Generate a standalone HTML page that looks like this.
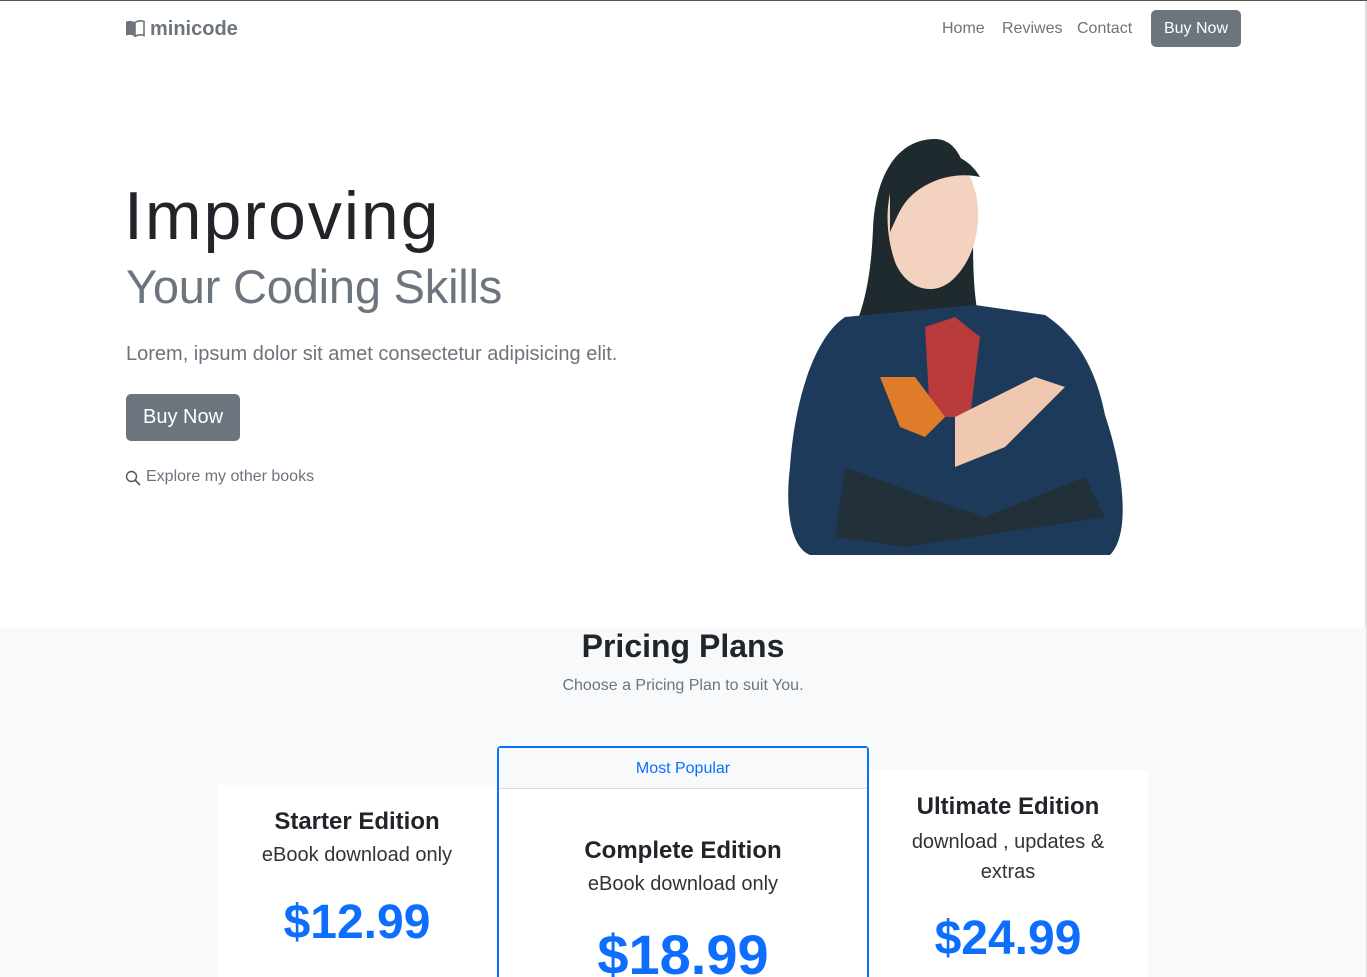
<!DOCTYPE html>
<html><head><meta charset="utf-8"><style>
*{box-sizing:border-box;margin:0;padding:0}
html,body{width:1367px;height:977px;overflow:hidden}
body{font-family:"Liberation Sans","DejaVu Sans",sans-serif;background:#fff;border-top:1px solid #555;position:relative;color:#212529}
.a{position:absolute}
.nav a{position:absolute;top:19px;font-size:16px;color:#6c757d;text-decoration:none}
.btn{background:#6c757d;color:#fff;border-radius:5px;position:absolute;text-align:center}
.pr{background:#f8f9fa;top:626px;left:0;width:1366px;height:351px}
.card{background:#fff;text-align:center}
h3{font-size:24px;font-weight:bold;color:#212529}
.sub{font-size:20px;color:#333;font-weight:300}
.price{color:#0d6efd;font-weight:bold;font-size:48px}
</style></head><body>
<div class="a" style="left:1365px;top:0;width:2px;height:977px;background:#ddd"></div>
<svg class="a" style="left:125px;top:19px" width="20" height="17" viewBox="0 0 20 17"><path d="M1 1.5c3-1 6-1 9 1v14c-3-2-6-2-9-1z" fill="#6c757d"/><path d="M10 2.5c3-2 6-2 9-1v14c-3-1-6-1-9 1z" fill="none" stroke="#6c757d" stroke-width="1.6"/></svg>
<div class="a" style="left:150px;top:17px;font-size:20px;font-weight:bold;color:#6c757d">minicode</div>
<div class="nav"><a style="left:942px">Home</a><a style="left:1002px">Reviwes</a><a style="left:1077px">Contact</a></div>
<div class="btn" style="left:1151px;top:9px;width:90px;height:37px;line-height:37px;font-size:16px">Buy Now</div>

<div class="a" style="left:124px;top:176px;font-size:68px;font-weight:300;color:#212529;letter-spacing:2px">Improving</div>
<div class="a" style="left:126px;top:258px;font-size:47px;font-weight:300;color:#6c757d;letter-spacing:-0.2px">Your Coding Skills</div>
<div class="a" style="left:126px;top:342px;font-size:20px;font-weight:300;color:#6c757d">Lorem, ipsum dolor sit amet consectetur adipisicing elit.</div>
<div class="btn" style="left:126px;top:393px;width:114px;height:47px;line-height:47px;font-size:20px">Buy Now</div>
<svg class="a" style="left:125px;top:469px" width="16" height="16" viewBox="0 0 16 16"><circle cx="6.5" cy="6.5" r="5" fill="none" stroke="#555" stroke-width="1.4"/><path d="M10 10l5 5" stroke="#555" stroke-width="1.6"/></svg>
<div class="a" style="left:146px;top:467px;font-size:16px;color:#6c757d">Explore my other books</div>

<svg class="a" style="left:785px;top:136px" width="340" height="420" viewBox="0 0 340 420">
<path d="M150 2c-40 0-60 40-62 90-2 50-10 90-30 120l60 10 80-20c-10-40-10-70-10-110-2-50-10-90-38-90z" fill="#1f2a2e"/>
<path d="M60 180c-30 20-50 80-55 150-5 40 0 80 20 88h300c20-20 15-80-5-140-10-50-30-80-60-100l-70-10z" fill="#1e3a5a"/>
<path d="M140 190l30-10 25 20-10 80-40 0z" fill="#b83a3a"/>
<path d="M110 40c10-20 60-20 75 0 15 30 10 80-20 105-20 15-45 5-55-20-10-30-10-60 0-85z" fill="#f3d2bf"/>
<path d="M105 30c20-20 70-25 90 10-20-5-50 0-70 20-10 10-15 25-20 35z" fill="#1f2a2e"/>
<path d="M95 240l20 50 25 10 20-20-30-40z" fill="#e07b2a"/>
<path d="M170 280l80-40 30 10-60 60-50 20z" fill="#f0c8b0"/>
<path d="M60 330l80 30 60 20 100-40 20 40-200 30-70-10z" fill="#22303a"/>
</svg>

<div class="a pr"></div>
<div class="a" style="left:0;width:1366px;top:627px;text-align:center;font-size:32px;font-weight:bold;color:#212529">Pricing Plans</div>
<div class="a" style="left:0;width:1366px;top:676px;text-align:center;font-size:16px;color:#6c757d">Choose a Pricing Plan to suit You.</div>

<div class="a card" style="left:218px;top:784px;width:278px;height:193px">
<h3 style="margin-top:23px">Starter Edition</h3>
<div class="sub" style="margin-top:8px">eBook download only</div>
<div class="price" style="margin-top:28px">$12.99</div></div>

<div class="a card" style="left:868px;top:769px;width:280px;height:208px">
<h3 style="margin-top:23px">Ultimate Edition</h3>
<div class="sub" style="margin-top:6px;line-height:30px">download , updates &amp;<br>extras</div>
<div class="price" style="margin-top:24px">$24.99</div></div>

<div class="a card" style="left:497px;top:745px;width:372px;height:260px;border:2px solid #0d6efd;border-radius:4px">
<div style="background:#f8f9fa;border-bottom:1px solid #ddd;height:41px;line-height:41px;color:#0d6efd;font-size:16px">Most Popular</div>
<h3 style="margin-top:48px">Complete Edition</h3>
<div class="sub" style="margin-top:8px">eBook download only</div>
<div class="price" style="margin-top:26px;font-size:56px">$18.99</div></div>
</body></html>
